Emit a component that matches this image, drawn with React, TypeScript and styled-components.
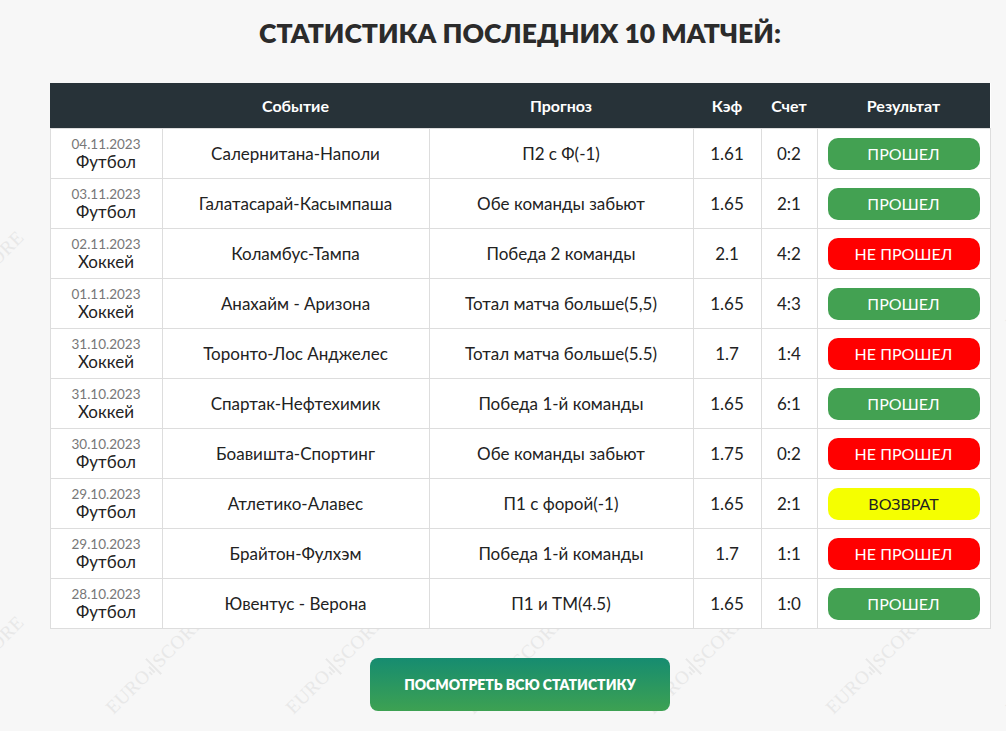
import React from 'react';
import styled, { createGlobalStyle } from 'styled-components';

type Result = 'win' | 'lose' | 'back';

interface Match {
  date: string;
  sport: string;
  event: string;
  tip: string;
  odds: string;
  score: string;
  result: Result;
}

const matches: Match[] = [
  { date: '04.11.2023', sport: 'Футбол', event: 'Салернитана-Наполи', tip: 'П2 с Ф(-1)', odds: '1.61', score: '0:2', result: 'win' },
  { date: '03.11.2023', sport: 'Футбол', event: 'Галатасарай-Касымпаша', tip: 'Обе команды забьют', odds: '1.65', score: '2:1', result: 'win' },
  { date: '02.11.2023', sport: 'Хоккей', event: 'Коламбус-Тампа', tip: 'Победа 2 команды', odds: '2.1', score: '4:2', result: 'lose' },
  { date: '01.11.2023', sport: 'Хоккей', event: 'Анахайм - Аризона', tip: 'Тотал матча больше(5,5)', odds: '1.65', score: '4:3', result: 'win' },
  { date: '31.10.2023', sport: 'Хоккей', event: 'Торонто-Лос Анджелес', tip: 'Тотал матча больше(5.5)', odds: '1.7', score: '1:4', result: 'lose' },
  { date: '31.10.2023', sport: 'Хоккей', event: 'Спартак-Нефтехимик', tip: 'Победа 1-й команды', odds: '1.65', score: '6:1', result: 'win' },
  { date: '30.10.2023', sport: 'Футбол', event: 'Боавишта-Спортинг', tip: 'Обе команды забьют', odds: '1.75', score: '0:2', result: 'lose' },
  { date: '29.10.2023', sport: 'Футбол', event: 'Атлетико-Алавес', tip: 'П1 с форой(-1)', odds: '1.65', score: '2:1', result: 'back' },
  { date: '29.10.2023', sport: 'Футбол', event: 'Брайтон-Фулхэм', tip: 'Победа 1-й команды', odds: '1.7', score: '1:1', result: 'lose' },
  { date: '28.10.2023', sport: 'Футбол', event: 'Ювентус - Верона', tip: 'П1 и ТМ(4.5)', odds: '1.65', score: '1:0', result: 'win' },
];

const resultLabel: Record<Result, string> = {
  win: 'ПРОШЕЛ',
  lose: 'НЕ ПРОШЕЛ',
  back: 'ВОЗВРАТ',
};

const resultColors: Record<Result, { bg: string; fg: string }> = {
  win: { bg: '#43a152', fg: '#ffffff' },
  lose: { bg: '#ff0000', fg: '#ffffff' },
  back: { bg: '#f5ff00', fg: '#222222' },
};

// centres of the faint "EUROSCORE" watermarks behind the page
const marks: { x: number; y: number }[] = [];
for (let row = 0; row < 3; row++) {
  for (let col = 0; col < 7; col++) {
    marks.push({ x: -25 + col * 180, y: -105 + row * 385 });
  }
}

const BarsIcon = () => (
  <svg width="10" height="22" viewBox="0 0 10 22" style={{ margin: '0 1px', verticalAlign: '-3px' }}>
    <rect x="0" y="12" width="2" height="4" fill="currentColor" />
    <rect x="3.5" y="8" width="2" height="8" fill="currentColor" />
    <rect x="7" y="0" width="2" height="22" fill="currentColor" />
  </svg>
);

const App: React.FC = () => {
  return (
    <Page>
      <GlobalStyle />
      <Watermarks>
        {marks.map((m, i) => (
          <Mark key={i} style={{ left: m.x - 70, top: m.y - 12 }}>
            EURO<BarsIcon />SCORE
          </Mark>
        ))}
      </Watermarks>
      <Content>
        <Title>СТАТИСТИКА ПОСЛЕДНИХ 10 МАТЧЕЙ:</Title>
        <Table>
          <colgroup>
            <col style={{ width: 112 }} />
            <col style={{ width: 267 }} />
            <col style={{ width: 264 }} />
            <col style={{ width: 68 }} />
            <col style={{ width: 56 }} />
            <col style={{ width: 173 }} />
          </colgroup>
          <thead>
            <tr>
              <Th></Th>
              <Th>Событие</Th>
              <Th>Прогноз</Th>
              <Th>Кэф</Th>
              <Th>Счет</Th>
              <Th>Результат</Th>
            </tr>
          </thead>
          <tbody>
            {matches.map((m, i) => (
              <tr key={i}>
                <Td>
                  <DateText>{m.date}</DateText>
                  <Sport>{m.sport}</Sport>
                </Td>
                <Td>{m.event}</Td>
                <Td>{m.tip}</Td>
                <Td>{m.odds}</Td>
                <Td>{m.score}</Td>
                <Td>
                  <Badge $result={m.result}>{resultLabel[m.result]}</Badge>
                </Td>
              </tr>
            ))}
          </tbody>
        </Table>
        <MoreButton>ПОСМОТРЕТЬ ВСЮ СТАТИСТИКУ</MoreButton>
      </Content>
    </Page>
  );
};

export default App;

const GlobalStyle = createGlobalStyle`
  html, body {
    margin: 0;
    padding: 0;
    background: #f7f7f7;
  }
  body {
    font-family: Lato, "Open Sans", sans-serif;
    color: #222;
  }
`;

const Page = styled.div`
  position: relative;
  width: 1006px;
  height: 731px;
  overflow: hidden;
  background: #f7f7f7;
`;

const Watermarks = styled.div`
  position: absolute;
  inset: 0;
  pointer-events: none;
`;

const Mark = styled.div`
  position: absolute;
  width: 140px;
  height: 24px;
  display: flex;
  align-items: center;
  justify-content: center;
  transform: rotate(-45deg);
  font-family: "Liberation Serif", serif;
  font-size: 19px;
  letter-spacing: 0.5px;
  color: #e8e8e8;
  white-space: nowrap;
`;

const Content = styled.div`
  position: relative;
  width: 940px;
  margin-left: 50px;
  display: flex;
  flex-direction: column;
  align-items: center;
  padding-top: 16px;
`;

const Title = styled.h2`
  margin: 0 0 33px;
  font-size: 26.5px;
  font-weight: 800;
  color: #2b2b2b;
  line-height: 34px;
`;

const Table = styled.table`
  width: 940px;
  border-collapse: collapse;
  table-layout: fixed;
  background: #fff;
`;

const Th = styled.th`
  height: 45px;
  padding: 0;
  background: #273238;
  color: #fff;
  font-size: 16px;
  font-weight: 700;
  text-align: center;
`;

const Td = styled.td`
  height: 49px;
  padding: 0;
  border: 1px solid #dddddd;
  text-align: center;
  font-size: 17px;
  color: #222;
  line-height: 20px;
`;

const DateText = styled.div`
  font-size: 13.5px;
  color: #777;
  line-height: 16px;
`;

const Sport = styled.div`
  font-size: 17px;
  line-height: 20px;
`;

const Badge = styled.div<{ $result: Result }>`
  width: 152px;
  height: 32px;
  margin: 0 auto;
  border-radius: 10px;
  display: flex;
  align-items: center;
  justify-content: center;
  font-size: 16px;
  background: ${(p) => resultColors[p.$result].bg};
  color: ${(p) => resultColors[p.$result].fg};
`;

const MoreButton = styled.button`
  margin-top: 29px;
  width: 300px;
  height: 53px;
  border: none;
  border-radius: 8px;
  background: linear-gradient(180deg, #168c70 0%, #3da152 100%);
  color: #fff;
  font-family: Lato, "Open Sans", sans-serif;
  font-size: 14px;
  font-weight: 800;
  cursor: pointer;
`;
